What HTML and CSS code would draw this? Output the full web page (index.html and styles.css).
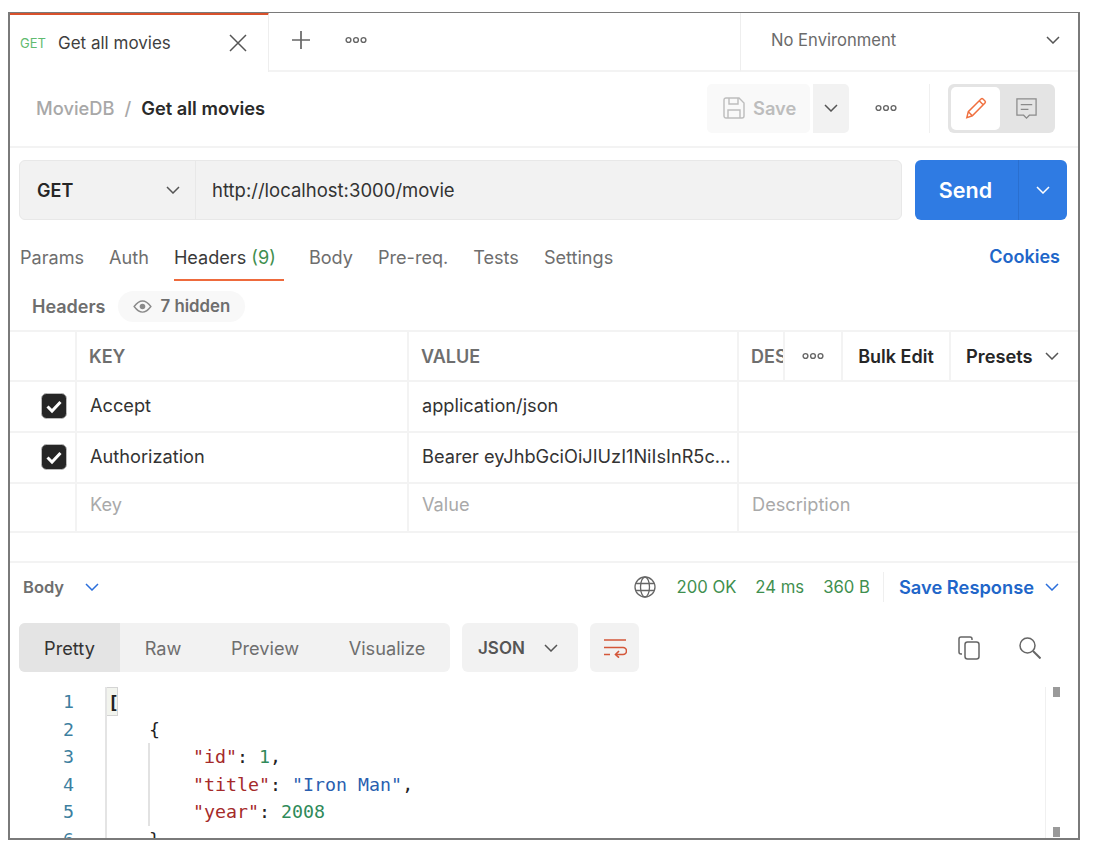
FILE: index.html
```html
<!DOCTYPE html>
<html lang="en">
<head>
<meta charset="utf-8">
<title>Get all movies</title>
<link rel="stylesheet" href="styles.css">
</head>
<body>
<svg class="defs" width="0" height="0" aria-hidden="true">
  <symbol id="chev" viewBox="0 0 14 8"><path d="M1 1l6 6 6-6" fill="none" stroke="currentColor" stroke-width="1.5"/></symbol>
  <symbol id="dots" viewBox="0 0 22 8"><g fill="none" stroke="currentColor" stroke-width="1.4"><circle cx="3.5" cy="4" r="2.4"/><circle cx="11" cy="4" r="2.4"/><circle cx="18.5" cy="4" r="2.4"/></g></symbol>
  <symbol id="check" viewBox="0 0 26 26"><rect x=".5" y=".5" width="25" height="25" rx="5" fill="#262626" stroke="#bbb"/><path d="M6.5 13.5l4.5 4.5 8.5-9" fill="none" stroke="#fff" stroke-width="3"/></symbol>
</svg>
<main class="frame">
  <header class="tabbar">
    <div class="tab">
      <span class="tab-method">GET</span>
      <span class="tab-name">Get all movies</span>
      <svg class="tab-close" viewBox="0 0 18 18"><path d="M1 1l16 16M17 1L1 17" stroke="#555" stroke-width="1.5" fill="none"/></svg>
    </div>
    <div class="tab-tools">
      <svg class="plus" viewBox="0 0 20 20"><path d="M10 1v18M1 10h18" stroke="#666" stroke-width="1.7" fill="none"/></svg>
      <svg class="dots" ><use href="#dots"/></svg>
    </div>
    <div class="env"><span>No Environment</span><svg class="chev"><use href="#chev"/></svg></div>
  </header>

  <section class="crumbs">
    <div class="crumb-text"><span class="crumb-parent">MovieDB</span><span class="crumb-sep">/</span><strong>Get all movies</strong></div>
    <div class="crumb-actions">
      <div class="save">
        <svg class="save-icon" viewBox="0 0 22 22"><g fill="none" stroke="#bdbdbd" stroke-width="1.4"><path d="M1 3a2 2 0 0 1 2-2h13l5 5v13a2 2 0 0 1-2 2H3a2 2 0 0 1-2-2z"/><path d="M6 1v6h9V1M5 21v-8h12v8"/></g></svg>
        <span>Save</span>
      </div>
      <div class="save-more"><svg class="chev"><use href="#chev"/></svg></div>
      <svg class="dots crumb-dots"><use href="#dots"/></svg>
      <div class="crumb-divider"></div>
      <div class="mode">
        <div class="mode-on"><svg viewBox="0 0 24 24" width="22" height="22"><path d="M2 22.5l1.600-6.500L17.500 2.200a1.500 1.500 0 0 1 2.100 0l2.200 2.200a1.500 1.500 0 0 1 0 2.100L8 20.500zM3.600 16L8 20.500M15.500 4.200l4.300 4.300" fill="none" stroke="#f0703f" stroke-width="1.600"/></svg></div>
        <div class="mode-off"><svg viewBox="0 0 24 24" width="23" height="23"><path d="M2 2h20v17h-7l-3 3-3-3H2zM6 8h12M6 13h8" fill="none" stroke="#8a8a8a" stroke-width="1.300"/></svg></div>
      </div>
    </div>
  </section>

  <section class="urlbar">
    <div class="url">
      <div class="method"><span>GET</span><svg class="chev"><use href="#chev"/></svg></div>
      <div class="url-text">http://localhost:3000/movie</div>
    </div>
    <div class="send"><span class="send-label">Send</span><span class="send-more"><svg class="chev"><use href="#chev"/></svg></span></div>
  </section>

  <nav class="reqtabs">
    <span class="reqtab">Params</span>
    <span class="reqtab">Auth</span>
    <span class="reqtab active">Headers <em>(9)</em></span>
    <span class="reqtab">Body</span>
    <span class="reqtab">Pre-req.</span>
    <span class="reqtab">Tests</span>
    <span class="reqtab">Settings</span>
    <span class="cookies">Cookies</span>
  </nav>

  <div class="hdr-title">
    <span class="hdr-label">Headers</span>
    <span class="hidden-pill"><svg viewBox="0 0 20 14" width="19" height="13"><path d="M1 7c3-4 6-6 9-6s6 2 9 6c-3 4-6 6-9 6s-6-2-9-6z" fill="none" stroke="#8a8a8a" stroke-width="1.500"/><circle cx="10" cy="7" r="3" fill="#8a8a8a"/></svg>7 hidden</span>
  </div>

  <section class="table">
    <div class="row head">
      <div class="cell tick"></div>
      <div class="cell">KEY</div>
      <div class="cell">VALUE</div>
      <div class="cell last">
        <span class="des">DESCRIPTION</span>
        <span class="tool tool-dots"><svg class="dots"><use href="#dots"/></svg></span>
        <span class="tool tool-bulk">Bulk Edit</span>
        <span class="tool tool-presets">Presets<svg class="chev"><use href="#chev"/></svg></span>
      </div>
    </div>
    <div class="row">
      <div class="cell tick"><svg class="check"><use href="#check"/></svg></div>
      <div class="cell val">Accept</div>
      <div class="cell val">application/json</div>
      <div class="cell"></div>
    </div>
    <div class="row">
      <div class="cell tick"><svg class="check"><use href="#check"/></svg></div>
      <div class="cell val">Authorization</div>
      <div class="cell val">Bearer eyJhbGciOiJIUzI1NiIsInR5c...</div>
      <div class="cell"></div>
    </div>
    <div class="row ghost">
      <div class="cell tick"></div>
      <div class="cell val">Key</div>
      <div class="cell val">Value</div>
      <div class="cell val">Description</div>
    </div>
  </section>

  <section class="resp-head">
    <div class="resp-left"><span>Body</span><svg class="chev blue"><use href="#chev"/></svg></div>
    <div class="resp-right">
      <svg class="globe" viewBox="0 0 22 22"><g fill="none" stroke="#666" stroke-width="1.300"><circle cx="11" cy="11" r="10"/><ellipse cx="11" cy="11" rx="4.500" ry="10"/><path d="M2 7.500h18M2 14.500h18"/></g></svg>
      <span class="stat s1">200 OK</span>
      <span class="stat s2">24 ms</span>
      <span class="stat s3">360 B</span>
      <span class="resp-divider"></span>
      <span class="save-resp">Save Response</span>
      <svg class="chev blue"><use href="#chev"/></svg>
    </div>
  </section>

  <section class="controls">
    <div class="views">
      <span class="view on">Pretty</span>
      <span class="view v-raw">Raw</span>
      <span class="view v-preview">Preview</span>
      <span class="view v-vis">Visualize</span>
    </div>
    <div class="lang"><span>JSON</span><svg class="chev"><use href="#chev"/></svg></div>
    <div class="wrap"><svg viewBox="0 0 24 20" width="24" height="20"><path d="M1 2h22M1 9.500h19a3.500 3.500 0 0 1 0 7h-7M1 16.500h6" fill="none" stroke="#d4573a" stroke-width="1.600"/><path d="M16 13l-3.500 3.500 3.500 3.200" fill="none" stroke="#d4573a" stroke-width="1.600"/></svg></div>
    <div class="ctl-right">
      <svg viewBox="0 0 22 24" width="22" height="24"><g fill="none" stroke="#666" stroke-width="1.500"><rect x="7" y="6" width="14" height="17" rx="2.500"/><path d="M4 18H3a2 2 0 0 1-2-2V3a2 2 0 0 1 2-2h9a2 2 0 0 1 2 2v1"/></g></svg>
      <svg viewBox="0 0 22 22" width="22" height="22"><g fill="none" stroke="#666" stroke-width="1.500"><circle cx="8.500" cy="8.500" r="7.500"/><path d="M14 14l7.500 7.500" stroke-width="2"/></g></svg>
    </div>
  </section>

  <section class="code">
    <ol class="nums"><li>1</li><li>2</li><li>3</li><li>4</li><li>5</li><li>6</li></ol>
    <div class="lines">
      <span class="match">[</span>
      <div class="ln ind1">{</div>
      <div class="guide">
        <div class="ln"><i class="k">"id"</i>: <i class="n">1</i>,</div>
        <div class="ln"><i class="k">"title"</i>: <i class="s">"Iron Man"</i>,</div>
        <div class="ln"><i class="k">"year"</i>: <i class="n">2008</i></div>
      </div>
      <div class="ln ind1">}</div>
    </div>
    <div class="scroll"><span class="thumb"></span><span class="thumb"></span></div>
  </section>
</main>
</body>
</html>
```
FILE: styles.css
```css
* { box-sizing: border-box; }
html, body { margin: 0; padding: 0; background: #fff; }
body { font-family: Inter, "Liberation Sans", sans-serif; color: #262626; padding: 12px 0 0 8px; font-size: 18px; }
.defs { position: absolute; }
.frame { width: 1072px; height: 828px; border: 2px solid #7a7a7a; border-top-width: 1px; overflow: hidden; display: flex; flex-direction: column; }

.chev { width: 14px; height: 8px; color: #555; flex: none; }
.chev.blue { color: #2b6fdc; }
.dots { width: 22px; height: 8px; color: #666; flex: none; }

.tabbar { display: flex; height: 59px; flex: none; }
.tab { width: 259px; margin-top: -1px; height: 60px; border-top: 3px solid #d9512c; border-right: 1px solid #eee; display: flex; align-items: center; padding: 0 21px 2px 10px; }
.tab-method { font-size: 13px; color: #5fbb70; width: 38px; }
.tab-name { font-size: 17px; color: #3f3f3f; flex: 1; }
.tab-close { width: 18px; height: 18px; }
.tab-tools { flex: none; width: 471px; display: flex; align-items: center; border-bottom: 2px solid #f3f3f3; padding: 0 0 4px 22px; gap: 34px; }
.plus { width: 20px; height: 20px; }
.env { flex: 1; display: flex; align-items: center; justify-content: space-between; border-left: 1px solid #eee; border-bottom: 2px solid #f3f3f3; padding: 0 18px 4px 30px; color: #6b6b6b; font-size: 16.600px; }

.crumbs { height: 76px; flex: none; display: flex; align-items: center; justify-content: space-between; padding: 0 23px 2px 26px; border-bottom: 2px solid #f3f3f3; }
.crumb-text { font-size: 18.300px; display: flex; gap: 10px; }
.crumb-parent, .crumb-sep { color: #a8a8a8; font-weight: 500; }
.crumb-text strong { font-weight: 600; color: #2a2a2a; }
.crumb-actions { display: flex; align-items: center; }
.save { width: 103px; height: 49px; background: #f9f9f9; border-radius: 5px; display: flex; align-items: center; gap: 8px; padding-left: 16px; color: #bdbdbd; font-weight: 600; font-size: 18.300px; }
.save-icon { width: 22px; height: 22px; }
.save-more { width: 36px; height: 49px; margin-left: 3px; background: #f2f2f2; border-radius: 0 5px 5px 0; display: flex; align-items: center; justify-content: center; }
.crumb-dots { margin-left: 26px; }
.crumb-divider { width: 1px; height: 49px; background: #f0f0f0; margin: 0 18px 0 32px; }
.mode { width: 107px; height: 49px; background: #e4e4e4; border-radius: 6px; padding: 3px; display: flex; }
.mode-on { width: 49px; height: 43px; background: #fff; border-radius: 5px; display: flex; align-items: center; justify-content: center; }
.mode-off { flex: 1; display: flex; align-items: center; justify-content: center; }

.urlbar { flex: none; display: flex; margin: 12px 11px 0 9px; height: 60px; gap: 13px; }
.url { flex: 1; display: flex; background: #f2f2f2; border: 1px solid #e8e8e8; border-radius: 6px; }
.method { width: 176px; border-right: 1px solid #e8e8e8; display: flex; align-items: center; justify-content: space-between; padding: 0 15px 0 17px; font-weight: 600; font-size: 18px; }
.url-text { padding-left: 16px; display: flex; align-items: center; font-size: 18.500px; color: #333; }
.send { width: 152px; background: #2f7be3; border-radius: 6px; display: flex; color: #fff; font-weight: 600; font-size: 21.500px; }
.send-label { width: 103px; padding-right: 2px; display: flex; align-items: center; justify-content: center; }
.send-more { flex: 1; border-left: 1px solid #2a6fcf; display: flex; align-items: center; justify-content: center; }
.send-more .chev { color: #fff; }

.reqtabs { flex: none; height: 41px; margin: 20px 18px 0 10px; display: flex; gap: 25px; font-size: 18.100px; color: #6e6e6e; }
.reqtab { height: 41px; display: flex; align-items: center; white-space: pre; padding-bottom: 8px; }
.reqtab.active { color: #3a3a3a; border-bottom: 2px solid #ee6a3c; width: 110px; padding-bottom: 6px; }
.reqtab em { font-style: normal; color: #3f8f4f; }
.cookies { margin-left: auto; color: #2166c9; font-weight: 600; display: flex; align-items: center; padding-bottom: 8px; font-size: 18px; }

.hdr-title { flex: none; height: 51px; display: flex; align-items: center; padding: 1px 0 0 22px; gap: 12px; border-bottom: 2px solid #f3f3f3; color: #6e6e6e; }
.hdr-label { font-weight: 600; font-size: 18px; }
.hidden-pill { height: 31px; width: 127px; border-radius: 16px; background: #f8f8f8; display: flex; align-items: center; padding-left: 15px; gap: 9px; font-weight: 600; font-size: 16.800px; }

.table { flex: none; border-bottom: 2px solid #f3f3f3; }
.row { display: grid; grid-template-columns: 65px 332px 330px 1fr; height: 51px; border-bottom: 2px solid #f3f3f3; }
.row:last-child { height: 47px; border-bottom: 0; }
.row.head { height: 50px; font-weight: 600; color: #6e6e6e; font-size: 18px; }
.cell { display: flex; align-items: center; padding-left: 12px; border-left: 2px solid #f3f3f3; min-width: 0; overflow: hidden; }
.cell.tick { border-left: 0; padding: 0 0 2px 31px; }
.cell.val { font-size: 18.200px; font-weight: 400; color: #333; padding: 0 0 3px 13px; white-space: nowrap; }
.check { width: 26px; height: 26px; }
.ghost .cell.val { color: #a9a9a9; padding-bottom: 7px; }
.last { padding: 0 0 0 12px; }
.des { width: 32px; overflow: hidden; white-space: nowrap; flex: none; }
.tool { height: 100%; display: flex; align-items: center; justify-content: center; border-left: 2px solid #f3f3f3; flex: none; color: #262626; }
.tool-dots { width: 58px; }
.tool-bulk { width: 108px; }
.tool-presets { flex: 1; justify-content: flex-start; padding-left: 15px; gap: 12px; font-size: 18.300px; }

.resp-head { flex: none; height: 50px; margin-top: 28px; border-top: 2px solid #f3f3f3; display: flex; align-items: center; justify-content: space-between; padding: 0 19px 0 13px; }
.resp-left { display: flex; align-items: center; gap: 21px; color: #6e6e6e; font-weight: 600; font-size: 16.500px; }
.resp-right { display: flex; align-items: center; }
.globe { width: 22px; height: 22px; margin-right: 20px; }
.stat { color: #3f8f4f; margin-right: 19px; font-size: 16.700px; }
.stat.s3 { margin-right: 13px; }
.resp-divider { width: 1px; height: 30px; background: #efefef; margin-right: 15px; }
.save-resp { color: #2166c9; font-weight: 600; margin-right: 11px; font-size: 18.300px; }

.controls { flex: none; display: flex; height: 49px; margin: 12px 37px 0 9px; align-items: stretch; font-size: 18.200px; }
.views { width: 431px; display: flex; background: #f2f2f2; border-radius: 6px; overflow: hidden; color: #6e6e6e; }
.view { display: flex; align-items: center; justify-content: center; }
.view.on { width: 101px; background: #e4e4e4; color: #333; }
.v-raw { width: 86px; }
.v-preview { width: 118px; }
.v-vis { width: 126px; }
.lang { width: 116px; margin-left: 12px; background: #f2f2f2; border-radius: 6px; display: flex; align-items: center; justify-content: space-between; padding: 0 20px 0 16px; font-weight: 600; font-size: 17px; color: #555; }
.wrap { width: 49px; margin-left: 12px; background: #f2f2f2; border-radius: 6px; display: flex; align-items: center; justify-content: center; }
.ctl-right { margin-left: auto; display: flex; align-items: center; gap: 39px; }

.code { flex: 1; min-height: 0; margin-top: 15px; display: flex; font-family: "DejaVu Sans Mono", monospace; font-size: 18.300px; line-height: 27.500px; overflow: hidden; color: #222; }
.nums { list-style: none; margin: 0; padding: 1px 0 0; width: 64px; text-align: right; color: #3d7f9f; flex: none; }
.lines { margin-left: 31px; flex: 1; border-left: 2px solid #e4e4e4; height: 200px; }
.match { display: block; width: 11px; height: 28.500px; line-height: 29.500px; padding-left: 1px; background: #f2f4ee; border: 1px solid #d4d4d4; border-left: 0; font-weight: 700; }
.ind1 { padding-left: 42px; }
.guide { margin-left: 41px; border-left: 2px solid #e2e2e2; padding-left: 43px; }
.guide i { font-style: normal; }
.k { color: #a52a2a; }
.n { color: #2f8a5a; }
.s { color: #2a5fb0; }
.scroll { width: 33px; flex: none; border-left: 1px solid #f0f0f0; display: flex; flex-direction: column; justify-content: space-between; align-items: flex-start; padding-bottom: 1px; }
.thumb { width: 7px; height: 10px; background: #9a9a9a; margin-left: 7px; }
```
